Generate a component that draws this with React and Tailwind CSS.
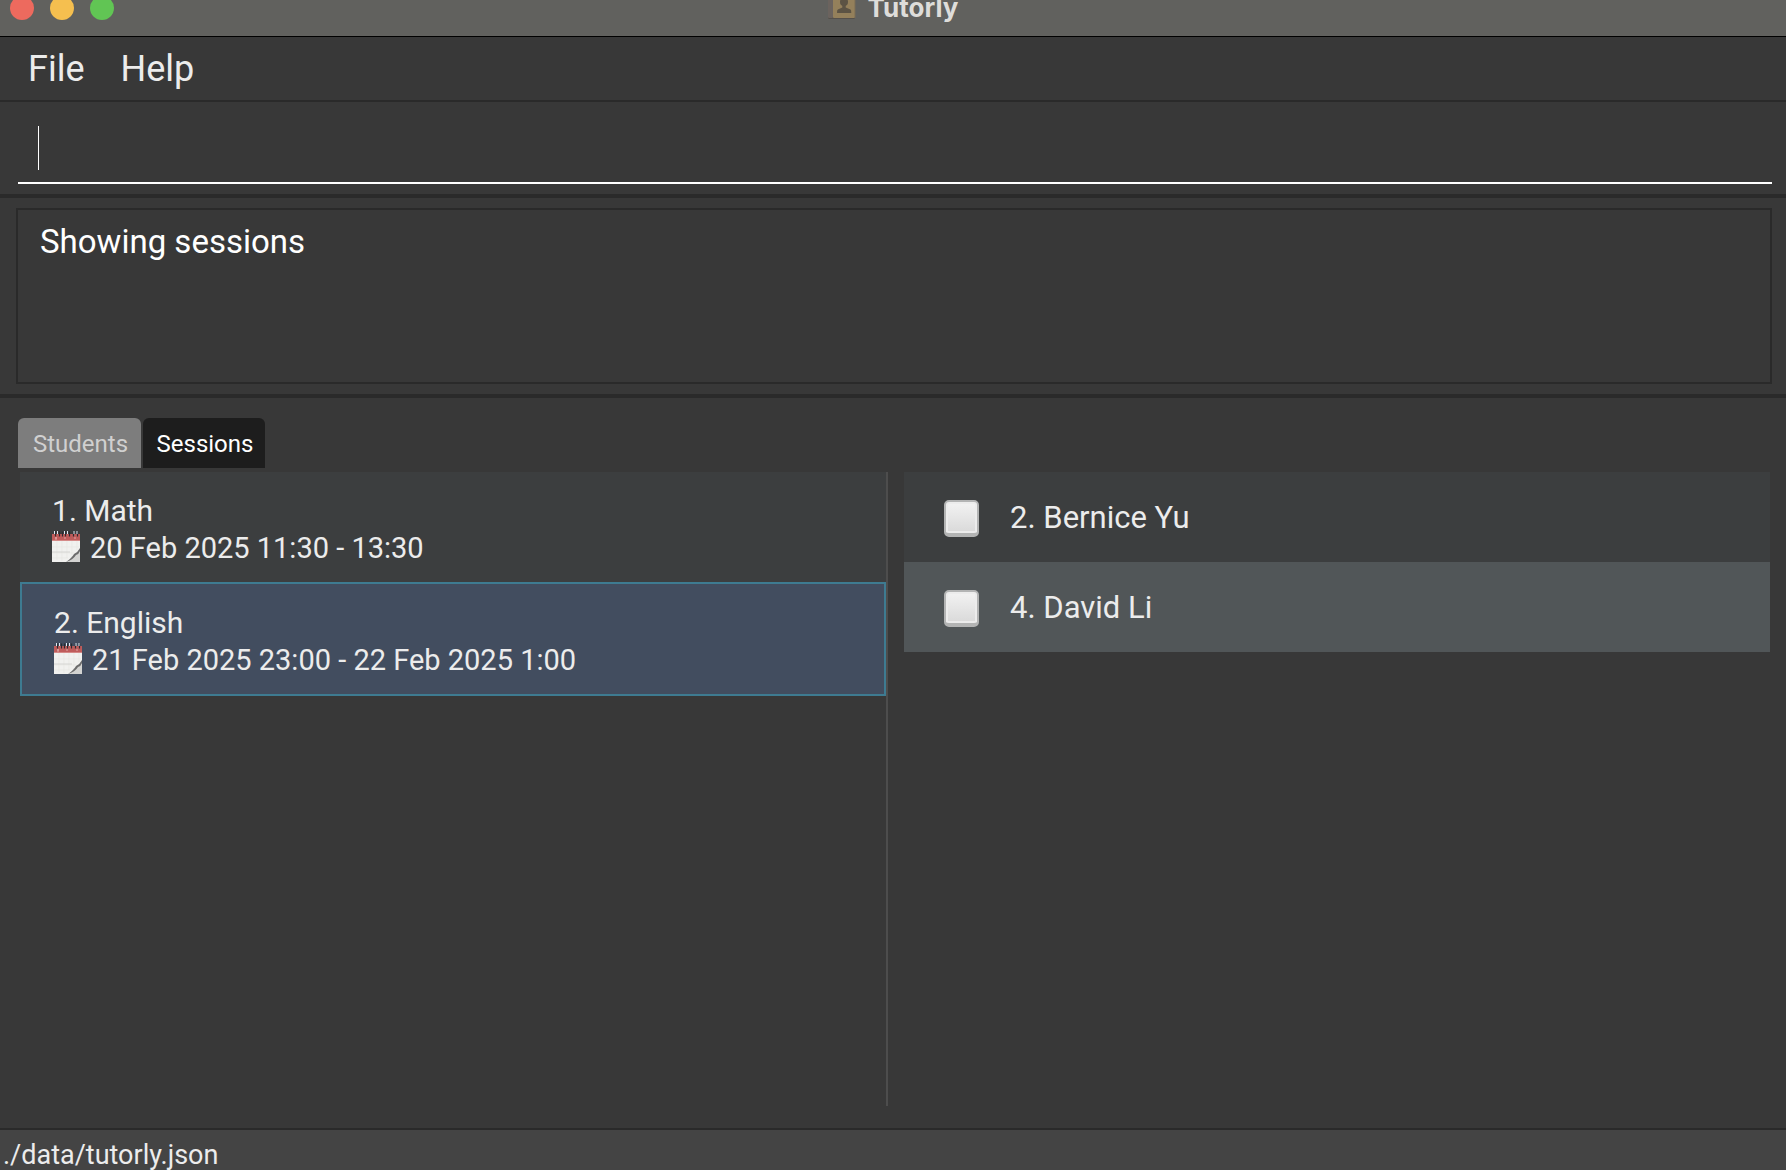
import { useState } from "react";

const SESSIONS = [
  { name: "Math", time: "20 Feb 2025 11:30 - 13:30" },
  { name: "English", time: "21 Feb 2025 23:00 - 22 Feb 2025 1:00" },
];

const STUDENTS = [
  { id: 2, name: "Bernice Yu", row: "bg-[#3c3e3f]" },
  { id: 4, name: "David Li", row: "bg-[#515658]" },
];

function BookIcon() {
  return (
    <svg className="h-8 w-7 shrink-0" viewBox="0 0 28 32" aria-hidden="true">
      <rect x="0" y="5" width="27" height="22" rx="1.5" fill="#55504b" />
      <rect x="0" y="4" width="5" height="22" rx="1" fill="#6b635e" />
      <rect x="5" y="2" width="22" height="24" rx="1" fill="#94805b" />
      <path d="M27 2v24" stroke="#7b6d55" />
      <circle cx="16" cy="10" r="4" fill="#5c5344" />
      <path d="M14.3 12h3.4v3.6l4.8 1.8q.8.4.8 3.6H9q0-3.200.8-3.600l4.500-1.800z" fill="#5c5344" />
    </svg>
  );
}

function CalendarIcon() {
  return (
    <svg className="h-8 w-7 shrink-0" viewBox="0 0 28 32" aria-hidden="true">
      <rect y="4" width="28" height="28" fill="#f1f1ef" />
      <rect y="4" width="28" height="7" fill="#bf5c5b" />
      <path d="M0 10.500h28" stroke="#d58a88" />
      <path d="M5 11v19M10 11v20M15 11v17M20 11v14M25 11v9M0 17h27M0 23h22M0 28h16" stroke="#e6e6e4" strokeWidth=".7" />
      <path d="M0 22h18" stroke="#cfcfcd" strokeWidth=".8" />
      <path d="M28 20q-3 5-8 6-2 4-6 6h14z" fill="#d3d3d1" />
      <path d="M28 18q-2 4-6 6-2 4-8 8 7-2 10-7 3-1 4-4z" fill="#6c6c6c" />
      <path d="M3 8h2M4 7v3M12 8h2M22 8h2" stroke="#e8b9b7" strokeWidth=".8" />
      <path d="M3.500 1.500v5M7.500 1.500v5M10.500 1.500v5M13.500 1.500v5M17.500 1.500v5M21.500 1.500v5M25.500 1.500v5" stroke="#2b2b30" strokeWidth="1.200" />
      <path d="M2.500 1v3M5.500 1v3M12.500 1v3M15.500 1v3M22 1v3M25 1v3" stroke="#dce8f2" strokeWidth="1" />
    </svg>
  );
}

function TitleBar() {
  return (
    <header className="flex h-[37px] items-end overflow-hidden border-b border-black bg-[#61615e]">
      <div className="grid h-14 w-full grid-cols-3 items-center">
        <div className="flex gap-4 pl-[10px]">
          <button aria-label="Close" className="size-6 rounded-full bg-[#ed6a5e]" />
          <button aria-label="Minimize" className="size-6 rounded-full bg-[#f5bf4f]" />
          <button aria-label="Zoom" className="size-6 rounded-full bg-[#61c554]" />
        </div>
        <div className="flex items-center justify-center gap-3">
          <BookIcon />
          <h1 className="font-['Inter','Liberation_Sans',sans-serif] text-[26px] leading-8 font-bold text-[#deddda]">
            Tutorly
          </h1>
        </div>
      </div>
    </header>
  );
}

export default function App() {
  const [tab, setTab] = useState("Sessions");
  const [selected, setSelected] = useState(1);

  return (
    <div className="flex min-h-screen flex-col bg-[#383838] font-['Roboto','Liberation_Sans',sans-serif] text-[#ececec]">
      <TitleBar />

      <nav className="flex h-[65px] items-center gap-9 border-b-2 border-[#2a2a2a] px-7 text-[36px] leading-10">
        <button>File</button>
        <button>Help</button>
      </nav>

      <div className="border-b-4 border-[#2a2a2a] pt-4 pr-[14px] pb-[10px] pl-[18px]">
        <div className="flex h-[66px] items-end border-b-2 border-white pb-3 pl-5">
          <span className="h-11 w-px bg-white" />
          <input aria-label="Command" className="h-11 flex-1 bg-transparent text-[33px] text-white outline-none" />
        </div>
      </div>

      <div className="border-b-4 border-[#2a2a2a] pt-[10px] pr-[14px] pb-[10px] pl-4">
        <div role="status" className="h-44 border-2 border-[#2a2a2a] px-[22px] py-3 text-[33px] leading-10 text-white">
          Showing sessions
        </div>
      </div>

      <main className="flex flex-1 flex-col pt-5 pb-[22px]">
        <div role="tablist" className="flex gap-[2px] px-[18px]">
          {["Students", "Sessions"].map((name) => (
            <button
              key={name}
              role="tab"
              aria-selected={tab === name}
              onClick={() => setTab(name)}
              className={
                tab === name
                  ? "h-[50px] w-[122px] rounded-t-md bg-[#1d1d1d] pt-[2px] pl-[2px] text-2xl text-white"
                  : "h-[50px] w-[123px] rounded-t-md bg-[#7d7d7d] pt-[2px] pl-[2px] text-2xl text-[#d0d0d0]"
              }
            >
              {name}
            </button>
          ))}
        </div>

        <div className="mt-1 grid flex-1 grid-cols-2 pr-4 pl-[6px]">
          <ul className="border-r-2 border-[#4d4d4d] pl-[14px]">
            {SESSIONS.map((session, i) => (
              <li key={session.name}>
                <button
                  onClick={() => setSelected(i)}
                  className={
                    selected === i
                      ? "block w-full border-2 border-[#3e7b91] bg-[#424d5f] px-8 pt-[21px] pb-[17px] text-left"
                      : "block w-full bg-[#3c3e3f] px-8 pt-[21px] pb-[17px] text-left"
                  }
                >
                  <span className="block text-[30px] leading-9">
                    {i + 1}. {session.name}
                  </span>
                  <span className="flex gap-[10px] pt-px text-[29px]">
                    <CalendarIcon />
                    <span className="pt-[2px] leading-[33px]">{session.time}</span>
                  </span>
                </button>
              </li>
            ))}
          </ul>

          <ul className="pl-4">
            {STUDENTS.map((student) => (
              <li key={student.id} className={student.row}>
                <label className="flex h-[90px] items-center gap-[31px] px-10 pt-[2px] text-[31px] leading-9">
                  <input
                    type="checkbox"
                    className="h-[37px] w-[35px] appearance-none rounded-[5px] border-2 border-b-4 border-[#b3b4b4] bg-linear-to-b from-[#f3f3f3] to-[#d9d9d9] shadow-[inset_0_0_0_2px_#ececec]"
                  />
                  <span>
                    {student.id}. {student.name}
                  </span>
                </label>
              </li>
            ))}
          </ul>
        </div>
      </main>

      <footer className="h-[42px] border-t-2 border-[#2a2a2a] bg-[#444444] pt-[10px] pl-[3px] text-[27px] leading-[30px]">
        ./data/tutorly.json
      </footer>
    </div>
  );
}
